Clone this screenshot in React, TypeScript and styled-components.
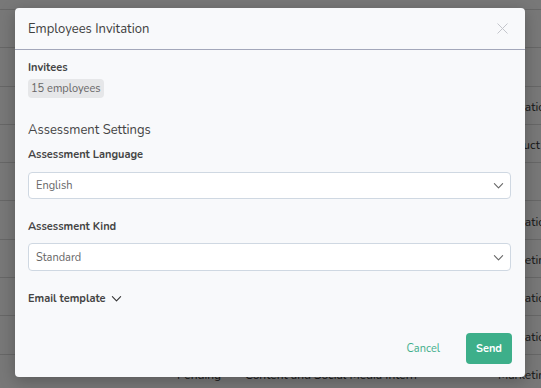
import React from 'react';
import styled, { createGlobalStyle } from 'styled-components';

const GlobalStyle = createGlobalStyle`
  html, body {
    margin: 0;
    padding: 0;
    background: #ffffff;
    font-family: 'Nunito', 'Lato', 'Noto Sans', sans-serif;
  }
  * { box-sizing: border-box; }
`;

// page behind the dialog
const Page = styled.div`
  width: 541px;
  height: 388px;
  overflow: hidden;
  position: relative;
  background: #ffffff;
`;

const Table = styled.div`
  display: flex;
  flex-direction: column;
  padding-top: 9px;
`;

const Row = styled.div`
  display: grid;
  grid-template-columns: 177px 68px 253px 120px;
  align-items: center;
  height: 38.3px;
  padding-top: 3px;
  border-top: 1px solid #dcdcdc;
  font-size: 12px;
  color: #333;
  white-space: nowrap;
`;

const Cell = styled.div`
  overflow: visible;
`;

const Overlay = styled.div`
  position: absolute;
  inset: 0;
  background: rgba(0, 0, 0, 0.53);
  padding: 8px 0 0 15px;
`;

const Modal = styled.div`
  width: 510px;
  height: 369px;
  background: #f8f9fb;
  border-radius: 4px;
  box-shadow: 0 4px 16px rgba(0, 0, 0, 0.25);
  display: flex;
  flex-direction: column;
  color: #444;
`;

const Header = styled.div`
  height: 42px;
  flex-shrink: 0;
  display: flex;
  align-items: center;
  justify-content: space-between;
  padding: 0 17px 0 13px;
  border-bottom: 1px solid #a3a7ba;
`;

const Title = styled.h2`
  margin: 0;
  font-size: 13px;
  font-weight: 400;
  color: #404040;
`;

const CloseButton = styled.button`
  all: unset;
  width: 11px;
  height: 11px;
  display: flex;
  cursor: pointer;
`;

const Body = styled.div`
  flex: 1;
  display: flex;
  flex-direction: column;
  padding: 11px 14px 0 13px;
`;

const Label = styled.div<{ $top?: number }>`
  margin-top: ${(p) => p.$top ?? 0}px;
  font-size: 11px;
  font-weight: 700;
  color: #444;
  line-height: 14px;
`;

const Badge = styled.span`
  align-self: flex-start;
  margin-top: 4px;
  padding: 0 3px;
  height: 19px;
  line-height: 19px;
  border-radius: 4px;
  background: #e6e7e9;
  font-size: 11px;
  color: #666;
`;

const SectionTitle = styled.h3`
  margin: 23px 0 0 0;
  font-size: 13px;
  font-weight: 400;
  color: #444;
  line-height: 18px;
`;

const Select = styled.div<{ $top: number; $height: number }>`
  margin-top: ${(p) => p.$top}px;
  height: ${(p) => p.$height}px;
  width: 483px;
  background: #ffffff;
  border: 1px solid #cfd8e2;
  border-radius: 4px;
  display: flex;
  align-items: center;
  justify-content: space-between;
  padding: 0 6px 0 7px;
  font-size: 11px;
  color: #666;
`;

const Toggle = styled.button`
  all: unset;
  margin-top: 19px;
  height: 16px;
  display: flex;
  align-items: center;
  gap: 5px;
  font-size: 11px;
  font-weight: 700;
  color: #444;
  cursor: pointer;
`;

const Footer = styled.div`
  display: flex;
  justify-content: flex-end;
  align-items: center;
  gap: 26px;
  padding: 0 13px 13px 0;
`;

const TextButton = styled.button`
  all: unset;
  font-size: 11px;
  color: #3fae8a;
  cursor: pointer;
`;

const PrimaryButton = styled.button`
  all: unset;
  width: 46px;
  height: 31px;
  border-radius: 4px;
  background: #3daf8a;
  color: #ffffff;
  font-size: 11px;
  font-weight: 700;
  display: flex;
  align-items: center;
  justify-content: center;
  cursor: pointer;
`;

const Chevron = ({ size = 11, color = '#666' }: { size?: number; color?: string }) => (
  <svg width={size} height={size} viewBox="0 0 12 12" fill="none">
    <path d="M1.5 4l4.5 4.5L10.5 4" stroke={color} strokeWidth="1.2" strokeLinecap="round" strokeLinejoin="round" />
  </svg>
);

const rows = [
  ['', '', '', 'HR'],
  ['', '', '', 'IT'],
  ['', '', '', 'Operations'],
  ['', '', '', 'Product'],
  ['', '', '', 'HR'],
  ['', '', '', 'Operations'],
  ['', '', '', 'Marketing'],
  ['', '', '', 'Operations'],
  ['', '', '', 'Operations'],
  ['', 'Pending', 'Content and Social Media Intern', 'Marketing'],
];

export default function App() {
  return (
    <>
      <GlobalStyle />
      <Page>
        <Table>
          {rows.map((r, i) => (
            <Row key={i}>
              {r.map((c, j) => (
                <Cell key={j}>{c}</Cell>
              ))}
            </Row>
          ))}
        </Table>
        <Overlay>
          <Modal>
            <Header>
              <Title>Employees Invitation</Title>
              <CloseButton aria-label="Close">
                <svg width="11" height="11" viewBox="0 0 11 11">
                  <path d="M0.5 0.5l10 10M10.5 0.5l-10 10" stroke="#c4c6cc" strokeWidth="1" />
                </svg>
              </CloseButton>
            </Header>
            <Body>
              <Label>Invitees</Label>
              <Badge>15 employees</Badge>
              <SectionTitle>Assessment Settings</SectionTitle>
              <Label $top={9}>Assessment Language</Label>
              <Select $top={10} $height={27}>
                English
                <Chevron />
              </Select>
              <Label $top={21}>Assessment Kind</Label>
              <Select $top={9} $height={28}>
                Standard
                <Chevron />
              </Select>
              <Toggle>
                Email template
                <Chevron size={11} color="#333" />
              </Toggle>
            </Body>
            <Footer>
              <TextButton>Cancel</TextButton>
              <PrimaryButton>Send</PrimaryButton>
            </Footer>
          </Modal>
        </Overlay>
      </Page>
    </>
  );
}
